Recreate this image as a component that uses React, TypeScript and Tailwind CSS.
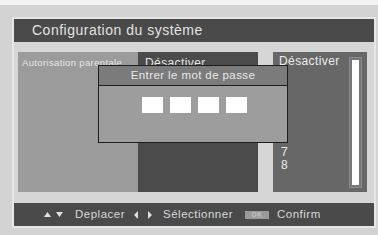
import React from "react";

const font = { fontFamily: '"Liberation Sans", Arial, sans-serif' };

function Tri({ dir, className }: { dir: "up" | "down" | "left" | "right"; className?: string }) {
  const pts = {
    up: "0,5 3.5,0 7,5",
    down: "0,0 7,0 3.5,5",
    left: "4,0 4,8 0,4",
    right: "0,0 4,4 0,8",
  }[dir];
  const horiz = dir === "up" || dir === "down";
  return (
    <svg
      width={horiz ? 7 : 4}
      height={horiz ? 5 : 8}
      viewBox={horiz ? "0 0 7 5" : "0 0 4 8"}
      className={className}
    >
      <polygon points={pts} fill="#e0e0e0" />
    </svg>
  );
}

export default function App() {
  return (
    <div className="relative h-[235px] w-[378px] overflow-hidden bg-[#d3d3d3]" style={font}>
      <div className="h-[5px] bg-[#f2f2f2]" />
      <div className="ml-[12px] mt-[12px] flex w-[364px] flex-col border-2 border-[#e6e6e6] bg-[#d6d6d6]">
        {/* title */}
        <div className="flex h-[23px] items-center bg-[#4a4a4a] pl-[18px] text-[14px] tracking-[0.5px] text-[#e2e2e2]">
          Configuration du système
        </div>

        {/* content */}
        <div className="relative mt-[10px] flex h-[140px] pl-[4px]">
          <div className="w-[120px] bg-[#9b9b9b] px-[4px] pt-[4px] text-[9.5px] tracking-[0.35px] text-[#e6e6e6]">
            Autorisation parentale
          </div>
          <div className="w-[120px] bg-[#4b4b4b] px-[7px] pt-[2px] text-[12px] tracking-[0.4px] text-[#e6e6e6]">
            Désactiver
          </div>
          <div className="ml-[15px] flex w-[94px] bg-[#676767] pl-[6px] pr-[5px] pt-[3px]">
            <div className="flex flex-1 flex-col text-[12px] leading-[13px] tracking-[0.4px] text-[#ececec]">
              <span>Désactiver</span>
              <span className="mt-[78px] pl-[2px]">7</span>
              <span className="pl-[2px]">8</span>
            </div>
            <div className="mb-[4px] mt-[2px] w-[13px] border border-[#8a8a8a] bg-[#777] p-[2px]">
              <div className="h-full bg-white" />
            </div>
          </div>

          {/* password popup */}
          <div className="absolute left-[84px] top-[13px] flex h-[78px] w-[190px] flex-col border border-[#1e1e1e] bg-[#9d9d9d]">
            <div className="flex h-[20px] items-center justify-center border-b border-[#1e1e1e] bg-[#7b7b7b] text-[11.5px] tracking-[0.4px] text-[#e8e8e8]">
              Entrer le mot de passe
            </div>
            <div className="mt-[11px] flex justify-center gap-[7px] pl-[2px]">
              <div className="h-[16px] w-[21px] bg-white" />
              <div className="h-[16px] w-[21px] bg-white" />
              <div className="h-[16px] w-[21px] bg-white" />
              <div className="h-[16px] w-[21px] bg-white" />
            </div>
          </div>
        </div>

        {/* footer */}
        <div className="mt-[11px] flex h-[23px] items-center bg-[#4a4a4a] pl-[30px] text-[11.5px] tracking-[0.5px] text-[#d8d8d8]">
          <Tri dir="up" />
          <Tri dir="down" className="ml-[5px]" />
          <span className="ml-[12px]">Deplacer</span>
          <Tri dir="left" className="ml-[9px]" />
          <Tri dir="right" className="ml-[10px]" />
          <span className="ml-[11px]">Sélectionner</span>
          <span className="ml-[12px] flex h-[8px] w-[24px] items-center justify-center bg-[#9a9a9a] text-[6.5px] font-bold text-[#c4c4c4]">
            OK
          </span>
          <span className="ml-[8px]">Confirm</span>
        </div>
      </div>
    </div>
  );
}
